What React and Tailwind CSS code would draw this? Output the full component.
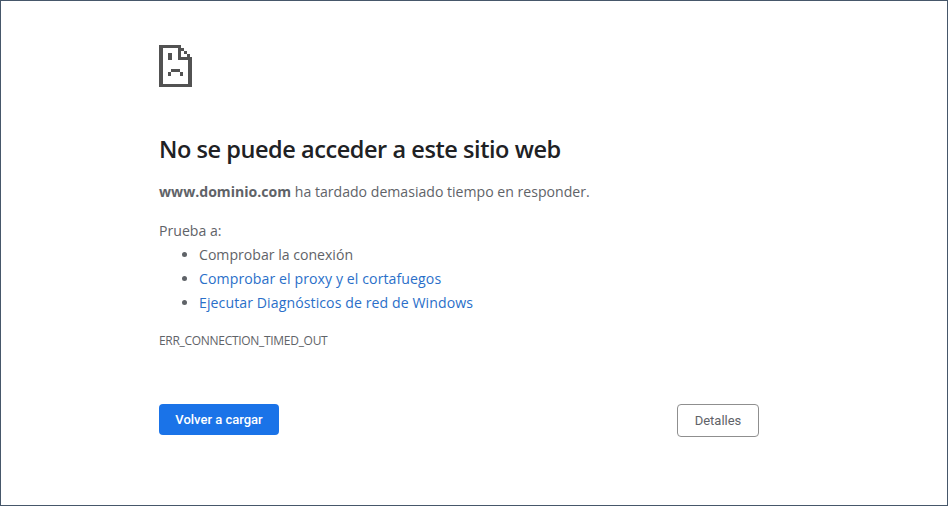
export default function App() {
  return (
    <div className="box-border flex h-[506px] w-[948px] flex-col border border-[#46576a] bg-white pl-[158px] pt-[44px] font-['Open_Sans',sans-serif] text-[#5f6368]">
      <svg width="33" height="42" viewBox="0 0 33 42" shapeRendering="crispEdges" fill="#525252" className="block">
        <rect x="0" y="0" width="4" height="42" />
        <rect x="0" y="0" width="21" height="3" />
        <rect x="0" y="39" width="33" height="3" />
        <rect x="29" y="14" width="4" height="28" />
        <rect x="19" y="0" width="3" height="15" />
        <rect x="19" y="12" width="14" height="3" />
        <rect x="22" y="3" width="3" height="3" />
        <rect x="25" y="6" width="3" height="3" />
        <rect x="28" y="9" width="3" height="3" />
        <rect x="9" y="8" width="4" height="7" />
        <rect x="12" y="24" width="9" height="3" />
        <rect x="9" y="27" width="3" height="4" />
        <rect x="21" y="27" width="3" height="4" />
      </svg>
      <h1 className="mt-[42px] text-[23.5px] font-semibold leading-[40px] tracking-[-0.44px] text-[#202124]">No se puede acceder a este sitio web</h1>
      <p className="mt-[11px] text-[14.1px] leading-[24px]">
        <strong className="font-bold">www.dominio.com</strong> ha tardado demasiado tiempo en responder.
      </p>
      <p className="mt-[15px] text-[14.1px] leading-[24px]">Prueba a:</p>
      <ul className="list-disc pl-[40px] text-[14.1px] leading-[24px]">
        <li>Comprobar la conexión</li>
        <li><span className="tracking-[0.09px] text-[#2a6fc9]">Comprobar el proxy y el cortafuegos</span></li>
        <li><span className="tracking-[0.09px] text-[#2a6fc9]">Ejecutar Diagnósticos de red de Windows</span></li>
      </ul>
      <p className="mt-[16px] text-[12px] leading-[20px] tracking-[-0.3px]">ERR_CONNECTION_TIMED_OUT</p>
      <div className="mt-[53px] flex w-[600px] items-start justify-between">
        <button className="h-[31px] w-[120px] rounded-[4px] bg-[#1a73e8] font-['Roboto',sans-serif] text-[13px] font-medium text-white">Volver a cargar</button>
        <button className="box-border h-[33px] w-[82px] rounded-[4px] border border-[#8f8f8f] bg-white font-['Roboto',sans-serif] text-[13px] text-[#5f6368]">Detalles</button>
      </div>
    </div>
  );
}
